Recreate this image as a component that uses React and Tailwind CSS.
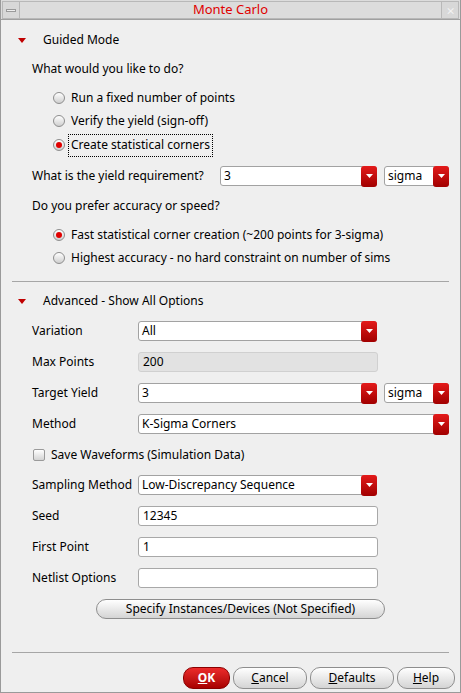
import React from "react";

const font = { fontFamily: '"Noto Sans", "Open Sans", sans-serif' };

function Tri() {
  return (
    <svg width="8" height="5" viewBox="0 0 8 5" className="ml-[17px]">
      <polygon points="0,0 8,0 4,5" fill="#c00000" />
    </svg>
  );
}

function Radio({ on }) {
  return (
    <span className="relative flex h-[12px] w-[12px] items-center justify-center rounded-full border border-[#8e8e8e] bg-gradient-to-b from-white to-[#cfcfcf]">
      {on && <span className="h-[6px] w-[6px] rounded-full bg-[#e00000]" />}
    </span>
  );
}

function Arrow() {
  return (
    <span className="flex h-[21px] w-[16px] items-center justify-center rounded-[3px] bg-gradient-to-b from-[#e41a1a] to-[#a10000] -my-px -mr-px">
      <svg width="7" height="4" viewBox="0 0 7 4">
        <polygon points="0,0 7,0 3.5,4" fill="#ffffff" />
      </svg>
    </span>
  );
}

function Combo({ w, value }) {
  return (
    <div className={`flex h-[20px] ${w} items-center rounded-[3px] border border-[#a2a2a2] bg-white`}>
      <span className="flex-1 pl-[3px] text-[12px] leading-none text-black">{value}</span>
      <Arrow />
    </div>
  );
}

function Field({ value, disabled }) {
  return (
    <div
      className={`flex h-[20px] w-[240px] items-center rounded-[3px] border pl-[4px] text-[12px] ${
        disabled ? "border-[#d0d0d0] bg-[#e2e2e2]" : "border-[#a8a8a8] bg-white"
      }`}
    >
      {value}
    </div>
  );
}

function Row({ mt, label, children }) {
  return (
    <div className={`flex h-[20px] items-center ${mt}`}>
      <span className="w-[137px] pl-[31px] shrink-0 whitespace-nowrap">{label}</span>
      {children}
    </div>
  );
}

function Btn({ children, w, red }) {
  return (
    <div
      className={`flex h-[22px] ${w} items-center justify-center rounded-[10px] border text-[12px] ${
        red
          ? "border-[#8a0000] bg-gradient-to-b from-[#ec2a2a] to-[#a80000] font-bold text-white"
          : "border-[#8e8e8e] bg-gradient-to-b from-white to-[#d4d4d4] text-black"
      }`}
    >
      {children}
    </div>
  );
}

export default function App() {
  return (
    <div
      className="relative h-[693px] w-[461px] overflow-hidden border-x border-b border-[#9a9a9a] bg-[#efefef] text-[12px] text-black"
      style={font}
    >
      {/* TITLE BAR */}
      <div className="flex h-[20px] items-stretch border-b border-[#a0a0a0] bg-[#dcdcdc] px-[1px] pt-[1px]">
        <div className="flex w-[18px] items-center justify-center border border-[#b8b8b8] bg-[#d8d8d8]">
          <span className="h-[3px] w-[10px] border border-[#9a9a9a] bg-[#eeeeee]" />
        </div>
        <div className="flex flex-1 items-center justify-center border-y border-[#b8b8b8] text-[13px] text-[#e00000]">
          Monte Carlo
        </div>
        <div className="flex w-[18px] items-center justify-center border border-[#b8b8b8] bg-[#d8d8d8] text-[11px] leading-none text-[#f4f4f4]">
          ⨯
        </div>
      </div>

      {/* GUIDED MODE */}
      <div className="mt-[10px] flex h-[20px] items-center">
        <Tri />
        <span className="ml-[17px]">Guided Mode</span>
      </div>
      <div className="mt-[9px] flex h-[20px] items-center pl-[31px]">What would you like to do?</div>
      <div className="mt-[9px] flex h-[20px] items-center gap-[6px] pl-[52px]">
        <Radio />
        <span>Run a fixed number of points</span>
      </div>
      <div className="mt-[3px] flex h-[20px] items-center gap-[6px] pl-[52px]">
        <Radio />
        <span>Verify the yield (sign-off)</span>
      </div>
      <div className="mt-[4px] flex h-[20px] items-center gap-[3px] pl-[52px]">
        <Radio on />
        <span className="flex h-[23px] items-center border border-dotted border-black px-[2px]">
          Create statistical corners
        </span>
      </div>
      <div className="mt-[11px] flex h-[20px] items-center pl-[31px]">
        <span className="w-[188px]">What is the yield requirement?</span>
        <Combo w="w-[157px]" value="3" />
        <div className="ml-[7px]">
          <Combo w="w-[65px]" value="sigma" />
        </div>
      </div>
      <div className="mt-[10px] flex h-[20px] items-center pl-[31px]">Do you prefer accuracy or speed?</div>
      <div className="mt-[9px] flex h-[20px] items-center gap-[6px] pl-[52px]">
        <Radio on />
        <span>Fast statistical corner creation (~200 points for 3-sigma)</span>
      </div>
      <div className="mt-[3px] flex h-[20px] items-center gap-[6px] pl-[52px]">
        <Radio />
        <span>Highest accuracy - no hard constraint on number of sims</span>
      </div>

      <div className="mx-[11px] mt-[13px] h-px bg-[#a6a6a6]" />

      {/* ADVANCED */}
      <div className="mt-[9px] flex h-[20px] items-center">
        <Tri />
        <span className="ml-[17px]">Advanced - Show All Options</span>
      </div>
      <Row mt="mt-[10px]" label="Variation">
        <Combo w="w-[239px]" value="All" />
      </Row>
      <Row mt="mt-[11px]" label="Max Points">
        <Field value="200" disabled />
      </Row>
      <Row mt="mt-[11px]" label="Target Yield">
        <Combo w="w-[239px]" value="3" />
        <div className="ml-[7px]">
          <Combo w="w-[65px]" value="sigma" />
        </div>
      </Row>
      <Row mt="mt-[11px]" label="Method">
        <Combo w="w-[311px]" value="K-Sigma Corners" />
      </Row>
      <div className="mt-[11px] flex h-[20px] items-center gap-[6px] pl-[32px]">
        <span className="h-[12px] w-[12px] rounded-[2px] border border-[#9a9a9a] bg-gradient-to-b from-white to-[#d4d4d4]" />
        <span>Save Waveforms (Simulation Data)</span>
      </div>
      <Row mt="mt-[10px]" label="Sampling Method">
        <Combo w="w-[239px]" value="Low-Discrepancy Sequence" />
      </Row>
      <Row mt="mt-[11px]" label="Seed">
        <Field value="12345" />
      </Row>
      <Row mt="mt-[11px]" label="First Point">
        <Field value="1" />
      </Row>
      <Row mt="mt-[11px]" label="Netlist Options">
        <Field value="" />
      </Row>
      <div className="mt-[11px] flex h-[20px] pl-[95px]">
        <div className="flex h-[20px] w-[289px] items-center justify-center rounded-[10px] border border-[#8e8e8e] bg-gradient-to-b from-white to-[#d4d4d4]">
          Specify Instances/Devices (Not Specified)
        </div>
      </div>

      <div className="mx-[11px] mt-[33px] h-px bg-[#a6a6a6]" />

      {/* BUTTONS */}
      <div className="mt-[14px] flex justify-end gap-[3px] pr-[5px]">
        <Btn w="w-[47px]" red>
          <span className="underline">O</span>K
        </Btn>
        <Btn w="w-[74px]">
          <span className="underline">C</span>ancel
        </Btn>
        <Btn w="w-[84px]">
          <span className="underline">D</span>efaults
        </Btn>
        <Btn w="w-[58px]">
          <span className="underline">H</span>elp
        </Btn>
      </div>
    </div>
  );
}
